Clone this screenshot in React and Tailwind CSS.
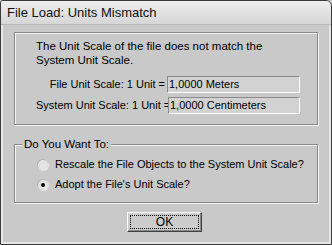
export default function App() {
  return (
    <div className="w-[332px] h-[245px] bg-[#c9c9c9] font-['Liberation_Sans',Arial,sans-serif] text-[11px] text-black">
      <div className="w-full h-full flex flex-col border border-[#3a3a3a] rounded-tr-[6px] rounded-tl-[3px] overflow-hidden">
        {/* Title bar */}
        <div className="h-[24px] shrink-0 bg-gradient-to-b from-[#eeeeee] to-[#d6d6d6] border-b border-[#b8b8b8] flex items-center pl-[6px] text-[13px] text-[#111]">
          File Load: Units Mismatch
        </div>

        <div className="flex-1 flex flex-col px-[11px] pt-[7px] border-l-2 border-r-2 border-[#e6e6e6] border-b-2">
          {/* Group 1 */}
          <div className="h-[93px] border border-[#888] shadow-[inset_1px_1px_0_#f4f4f4,1px_1px_0_#f4f4f4] pt-[6px] pl-[21px] pr-[17px]">
            <p className="leading-[14px] text-[11.5px]">
              The Unit Scale of the file does not match the
              <br />
              System Unit Scale.
            </p>
            <div className="mt-[9px] flex flex-col gap-[4px]">
              <div className="flex items-center">
                <span className="w-[132px] text-right pr-[2px] whitespace-nowrap">File Unit Scale: 1 Unit =</span>
                <div className="w-[134px] h-[17px] border-t border-l border-[#8a8a8a] border-r border-b border-r-white border-b-white bg-[#d2d2d2] flex items-center pl-[1px] leading-none">
                  1,0000 Meters
                </div>
              </div>
              <div className="flex items-center">
                <span className="w-[132px] text-right pr-[2px] whitespace-nowrap">System Unit Scale: 1 Unit =</span>
                <div className="w-[134px] h-[17px] border-t border-l border-[#8a8a8a] border-r border-b border-r-white border-b-white bg-[#d2d2d2] flex items-center pl-[1px] leading-none">
                  1,0000 Centimeters
                </div>
              </div>
            </div>
          </div>

          {/* Group 2 */}
          <div className="relative mt-[19px] h-[59px] border border-[#888] shadow-[inset_1px_1px_0_#f4f4f4,1px_1px_0_#f4f4f4] pt-[13px] pl-[22px]">
            <span className="absolute -top-[8px] left-[7px] bg-[#c9c9c9] px-[2px] leading-[14px] text-[11.5px]">Do You Want To:</span>
            <div className="flex flex-col gap-[7px]">
              <label className="flex items-center gap-[6px] leading-[13px] whitespace-nowrap">
                <span className="w-[12px] h-[12px] rounded-full bg-gradient-to-br from-[#9a9a9a] to-[#ffffff] p-[1px]">
                  <span className="block w-full h-full rounded-full bg-[#e4e4e4]" />
                </span>
                Rescale the File Objects to the System Unit Scale?
              </label>
              <label className="flex items-center gap-[6px] leading-[13px] whitespace-nowrap">
                <span className="w-[12px] h-[12px] rounded-full bg-gradient-to-br from-[#9a9a9a] to-[#ffffff] p-[1px]">
                  <span className="w-full h-full rounded-full bg-[#e4e4e4] flex items-center justify-center">
                    <span className="w-[4px] h-[4px] rounded-full bg-black" />
                  </span>
                </span>
                Adopt the File's Unit Scale?
              </label>
            </div>
          </div>

          {/* OK */}
          <div className="mt-[9px] flex justify-center pr-[3px]">
            <button className="w-[75px] h-[20px] bg-[#cccccc] border border-t-white border-l-white border-r-[#404040] border-b-[#404040] shadow-[inset_-1px_-1px_0_#888] p-[2px]">
              <span className="w-full h-full flex items-center justify-center border border-dotted border-black leading-none text-[12px]">
                OK
              </span>
            </button>
          </div>
        </div>
      </div>
    </div>
  );
}
